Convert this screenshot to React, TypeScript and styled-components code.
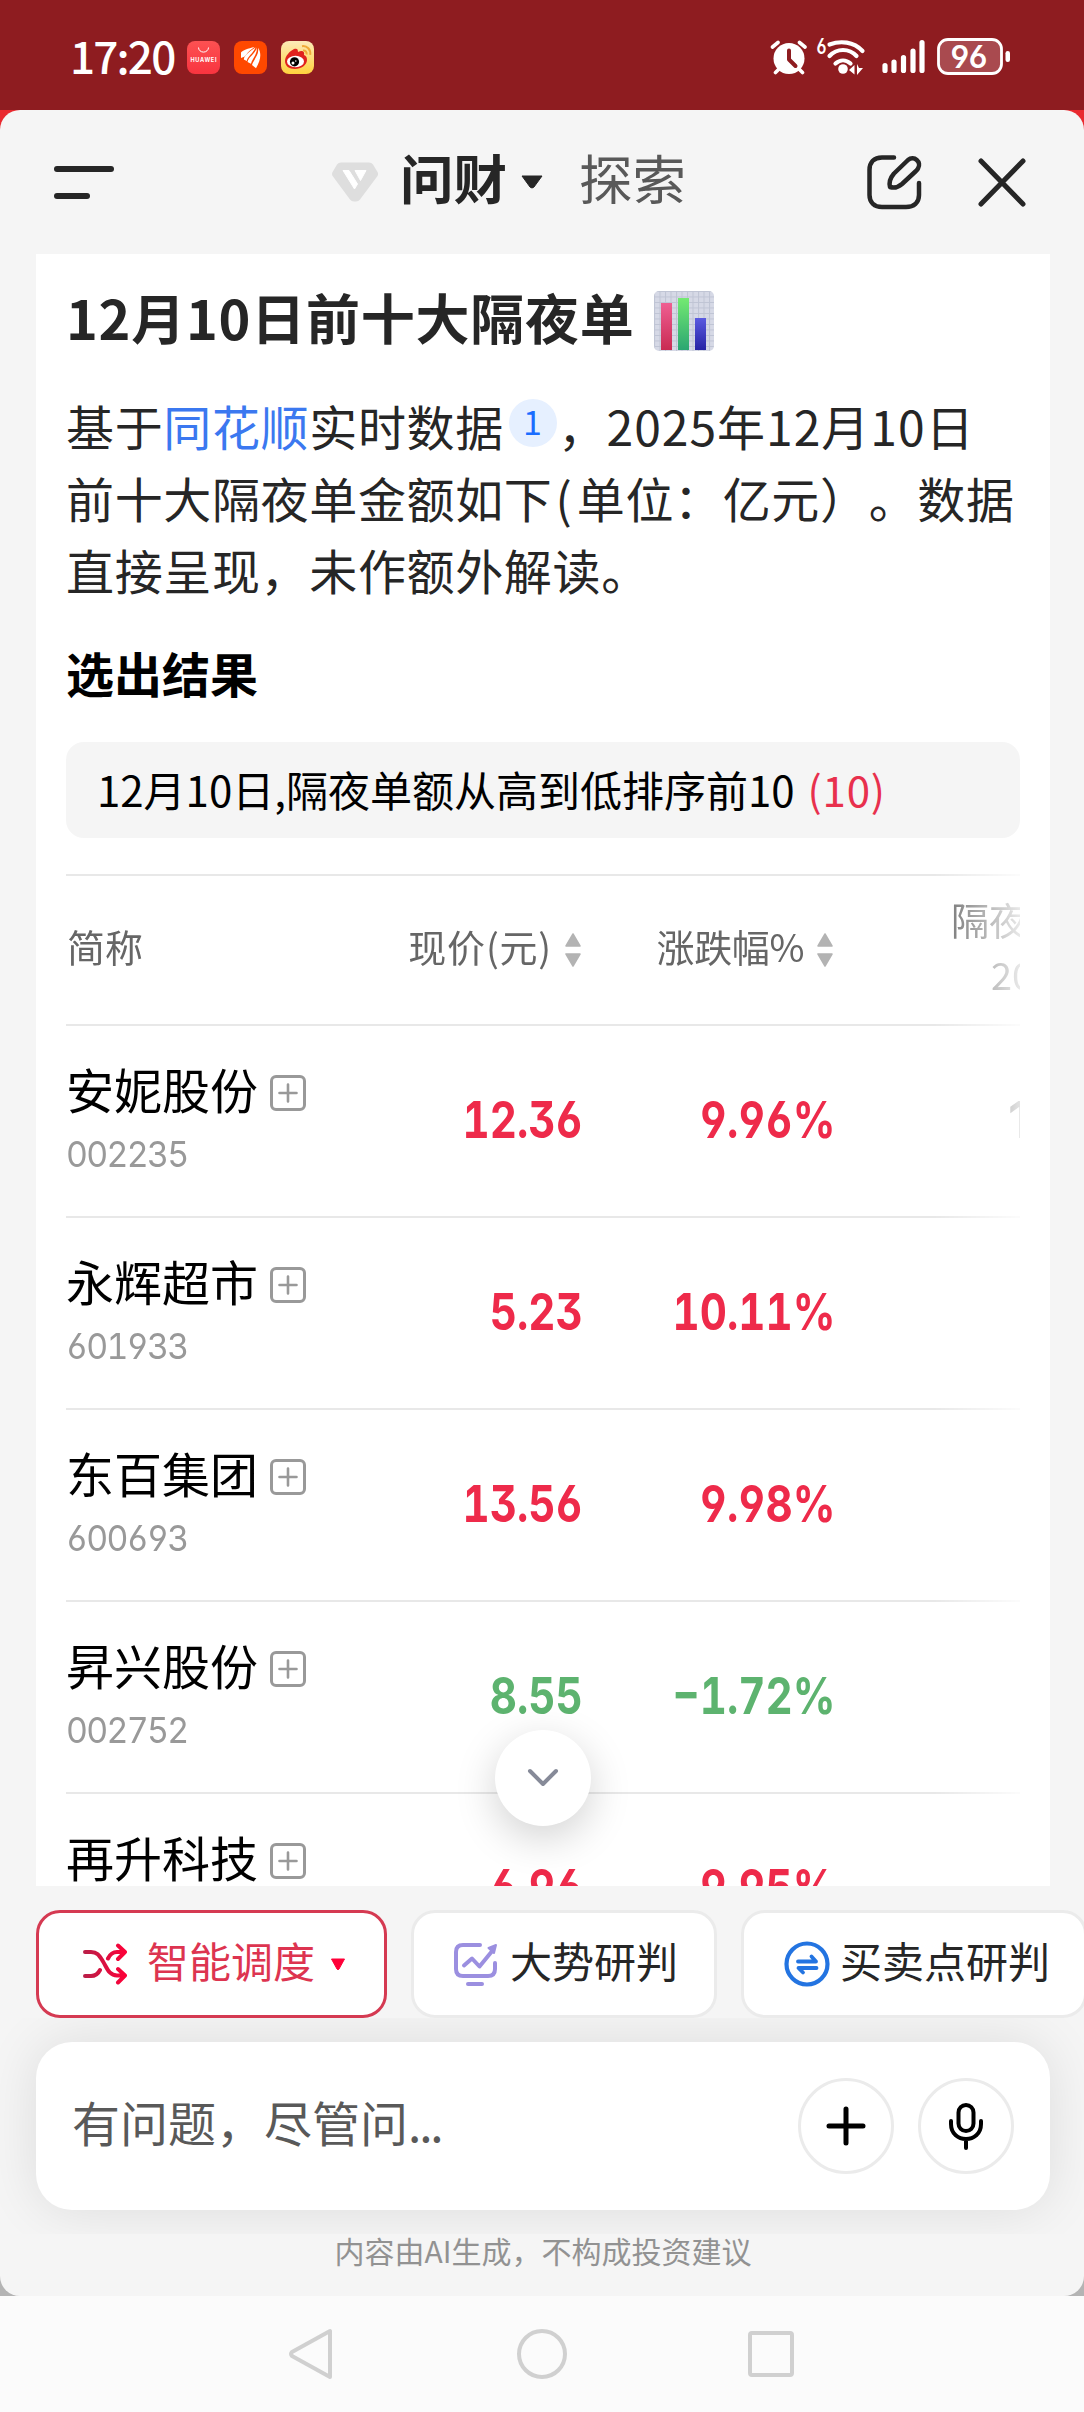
import React from "react";
import styled, { createGlobalStyle } from "styled-components";

const cjk = '"Noto Sans CJK SC", "Noto Sans", sans-serif';
const num = 'Inter, "Noto Sans CJK SC", sans-serif';
const red = "#ee2a4a";
const green = "#5db36f";

const GlobalStyle = createGlobalStyle`
  * { box-sizing: border-box; }
  html, body { margin: 0; padding: 0; }
  body { width: 1084px; overflow: hidden; font-family: ${cjk}; color: #262626; background: #fbfbfb; }
  h1, h2, p { margin: 0; }
  svg { display: block; flex: none; }
  button { font: inherit; border: 0; padding: 0; margin: 0; background: none; }
`;

const Screen = styled.div`
  width: 1084px;
  height: 2412px;
  display: flex;
  flex-direction: column;
  overflow: hidden;
  text-spacing-trim: space-all;
`;

const StatusBar = styled.header`
  flex: none;
  height: 110px;
  background: #8e1c20;
  color: #fff;
  display: flex;
  align-items: center;
  padding: 4px 74px 0 70px;
`;

const Clock = styled.span`
  width: 117px;
  margin-top: -5px;
  font-size: 44px;
  line-height: 60px;
  font-weight: 500;
  letter-spacing: -1.8px;
  white-space: nowrap;
`;

const AppIcons = styled.div`
  display: flex;
  gap: 14px;
  flex: 1;
`;

const Backdrop = styled.div`
  flex: none;
  height: 2186px;
  background: linear-gradient(#e9292f 0 50%, #b4b4b4 50% 100%);
`;

const Sheet = styled.main`
  height: 100%;
  background: #f5f5f5;
  border-radius: 20px;
  display: flex;
  flex-direction: column;
  overflow: hidden;
`;

const TopBar = styled.div`
  flex: none;
  height: 144px;
  display: flex;
  align-items: center;
  padding: 0 58px 0 54px;
`;

const MenuButton = styled.button`
  width: 278px;
  display: flex;
  flex-direction: column;
  gap: 21px;
`;

const MenuLine = styled.span<{ $w: number }>`
  width: ${(p) => p.$w}px;
  height: 6px;
  border-radius: 3px;
  background: #262626;
`;

const Tab = styled.span<{ $active?: boolean }>`
  font-size: 53.5px;
  line-height: 70px;
  font-weight: ${(p) => (p.$active ? 700 : 400)};
  color: ${(p) => (p.$active ? "#262626" : "#595959")};
  margin-left: ${(p) => (p.$active ? 22 : 35)}px;
  margin-right: ${(p) => (p.$active ? 13 : 0)}px;
  margin-top: -11px;
`;

const TopActions = styled.div`
  margin-left: auto;
  display: flex;
  align-items: center;
  gap: 56px;
`;

const Card = styled.section`
  flex: none;
  position: relative;
  width: 1014px;
  height: 1632px;
  margin-left: 36px;
  padding: 27px 30px 0;
  background: #fff;
  overflow: hidden;
`;

const Title = styled.h1`
  display: flex;
  align-items: center;
  gap: 20px;
  height: 72px;
  font-size: 54px;
  line-height: 72px;
  font-weight: 700;
  letter-spacing: 0.75px;
  white-space: nowrap;
`;

const Intro = styled.p`
  margin-top: 36px;
  width: 970px;
  height: 216px;
  font-size: 48px;
  line-height: 72px;
  letter-spacing: 0.65px;
  white-space: nowrap;
`;

const Link = styled.span`
  color: #3b78f0;
`;

const DateText = styled.span`
  letter-spacing: 1px;
`;

const Paren = styled.span`
  margin-left: 3px;
  letter-spacing: 5px;
`;

const Cite = styled.sup`
  display: inline-flex;
  align-items: center;
  justify-content: center;
  width: 48px;
  height: 48px;
  margin: 0 1px 0 5px;
  vertical-align: 11px;
  border-radius: 50%;
  background: #e6f0ff;
  color: #1a6dff;
  font-size: 34px;
  line-height: 44px;
  padding-bottom: 4px;
`;

const SubTitle = styled.h2`
  margin-top: 31px;
  height: 72px;
  font-size: 48px;
  line-height: 72px;
  font-weight: 700;
  color: #000;
`;

const Filter = styled.div`
  margin-top: 34px;
  height: 96px;
  padding: 0 31px 3px;
  display: flex;
  align-items: center;
  gap: 13px;
  border-radius: 18px;
  background: #f5f5f5;
  color: #000;
  font-size: 42px;
  line-height: 60px;
  white-space: nowrap;
`;

const Count = styled.span`
  color: #e8304d;
  letter-spacing: 0.8px;
`;

const Table = styled.div`
  margin-top: 36px;
  width: 954px;
  overflow: hidden;
  border-top: 2px solid #e8e8e8;
  mask-image: linear-gradient(to right, #000 868px, rgba(0, 0, 0, 0.15) 954px);
`;

const Row = styled.div<{ $h: number }>`
  display: grid;
  grid-template-columns: 263px 252px 252px 420px;
  width: 1187px;
  height: ${(p) => p.$h}px;
  align-items: center;
  border-bottom: 2px solid #e8e8e8;
`;

const HeadCell = styled.div<{ $left?: boolean }>`
  display: flex;
  align-items: center;
  justify-content: ${(p) => (p.$left ? "flex-start" : "flex-end")};
  gap: 13px;
  padding-left: ${(p) => (p.$left ? 1 : 0)}px;
  color: #666;
  font-size: 38px;
  line-height: 54px;
  white-space: nowrap;
`;

const HeadText = styled.span<{ $ls?: number }>`
  margin-top: -8px;
  letter-spacing: ${(p) => p.$ls ?? 0}px;
`;

const WideHead = styled.div`
  color: #666;
  font-size: 38px;
  line-height: 55px;
  margin-top: -9px;
  padding-left: 118px;
  display: flex;
  flex-direction: column;
`;

const WideLine = styled.span<{ $indent?: number }>`
  padding-left: ${(p) => p.$indent ?? 0}px;
  white-space: nowrap;
`;

const NameCell = styled.div`
  display: flex;
  flex-direction: column;
`;

const NameLine = styled.div`
  display: flex;
  align-items: center;
  gap: 12px;
  height: 66px;
  color: #000;
  font-size: 48px;
  line-height: 66px;
  white-space: nowrap;
`;

const NameText = styled.span`
  margin-top: -6px;
`;

const AddBox = styled.svg`
  margin-top: 4px;
`;

const Code = styled.span`
  height: 60px;
  line-height: 61px;
  font-family: ${num};
  font-feature-settings: "tnum", "cv03", "cv04";
  font-size: 36px;
  letter-spacing: -1.8px;
  transform: scaleX(0.94);
  transform-origin: left;
  color: #999;
`;

const Value = styled.div<{ $color: string }>`
  justify-self: end;
  transform: scaleX(0.825);
  transform-origin: right;
  font-family: ${num};
  font-feature-settings: "tnum", "cv03", "cv04", "cv09";
  font-weight: 650;
  font-size: 51px;
  line-height: 60px;
  margin: -3px -2px 0 0;
  color: ${(p) => p.$color};
  white-space: nowrap;
`;

const Hidden = styled.div`
  padding-left: 175px;
  font-family: ${num};
  font-weight: 600;
  font-size: 51px;
  line-height: 60px;
  margin-top: -3px;
  color: #444;
`;

const DownButton = styled.button`
  position: absolute;
  left: 459px;
  top: 1476px;
  width: 96px;
  height: 96px;
  border-radius: 50%;
  background: #fff;
  display: flex;
  align-items: center;
  justify-content: center;
  box-shadow: 0 12px 42px rgba(0, 0, 0, 0.18);
`;

const Chips = styled.div`
  flex: none;
  height: 132px;
  padding: 24px 0 0 36px;
  display: flex;
  gap: 24px;
`;

const Chip = styled.button<{ $w: number; $active?: boolean }>`
  flex: none;
  width: ${(p) => p.$w}px;
  height: 108px;
  border: 3px solid ${(p) => (p.$active ? "#d53a52" : "#ebebeb")};
  border-radius: 24px;
  background: #fff;
  display: flex;
  align-items: center;
  padding-left: ${(p) => (p.$active ? 44 : 40)}px;
  font-size: 42px;
  line-height: 60px;
  color: ${(p) => (p.$active ? "#dd3450" : "#262626")};
  white-space: nowrap;
`;

const ChipText = styled.span<{ $gap: number }>`
  margin-left: ${(p) => p.$gap}px;
  margin-top: -8px;
`;

const Caret = styled.svg`
  margin-left: 15px;
`;

const Composer = styled.div`
  flex: none;
  height: 216px;
  padding: 24px 34px 24px 36px;
  overflow: hidden;
`;

const InputBox = styled.div`
  height: 168px;
  border-radius: 36px;
  background: #fff;
  box-shadow: 0 0 54px rgba(0, 0, 0, 0.1);
  display: flex;
  align-items: center;
  gap: 24px;
  padding: 0 36px;
`;

const Placeholder = styled.span`
  flex: 1;
  font-size: 48px;
  line-height: 66px;
  margin-top: -10px;
  color: #595959;
`;

const Dots = styled.span`
  letter-spacing: -2.2px;
`;

const RoundButton = styled.button`
  width: 96px;
  height: 96px;
  border: 3px solid #ebebeb;
  border-radius: 50%;
  display: flex;
  align-items: center;
  justify-content: center;
`;

const Disclaimer = styled.p`
  margin-top: -2px;
  text-align: center;
  font-size: 30px;
  line-height: 36px;
  color: #929292;
  padding-left: 2px;
`;

const NavBar = styled.nav`
  flex: 1;
  background: #fbfbfb;
  display: flex;
  align-items: center;
  padding-left: 288px;
`;

const NavIcon = styled.svg<{ $ml?: number }>`
  margin-left: ${(p) => p.$ml ?? 0}px;
`;

const HuaweiIcon = () => (
  <svg width="33" height="33" viewBox="0 0 33 33">
    <defs>
      <linearGradient id="hw" x1="0" y1="0" x2="0" y2="1">
        <stop offset="0" stopColor="#fd5152" />
        <stop offset="1" stopColor="#f8343f" />
      </linearGradient>
    </defs>
    <rect width="33" height="33" rx="8" fill="url(#hw)" />
    <path d="M11.5 6.5a5 4.6 0 0 0 10 0" fill="none" stroke="#fff" strokeWidth="1" />
    <text x="16.5" y="21" textAnchor="middle" fontSize="5.6" fontWeight="700" fontFamily="Inter, sans-serif" fill="#fff" textLength="26">HUAWEI</text>
  </svg>
);

const FeatherIcon = () => (
  <svg width="33" height="33" viewBox="0 0 33 33">
    <rect width="33" height="33" rx="8" fill="#ff4800" />
    <g fill="#fff">
      <path d="M20.500 6C14 7.500 8.500 9.500 7 11.500V17c3-1 4-1.500 5-3 2-3 5-5.500 8.500-8z" />
      <path d="M21.500 6.500C17 9.500 10 14 9.800 18.500l3 1.500c.2-4 6.700-8 8.700-13.500z" />
      <path d="M22.800 6.500C22 12 14.500 15.500 13.500 21l3.500 1.800c.5-4.300 6.500-9.300 5.800-16.300z" />
      <path d="M24 6.800c1.500 7-4.500 11.700-6 17.200l4 3.200C26.500 20 28 12.500 24 6.800z" />
    </g>
  </svg>
);

const WeiboIcon = () => (
  <svg width="33" height="33" viewBox="0 0 33 33">
    <defs>
      <linearGradient id="wb" x1="0" y1="0" x2="0" y2="1">
        <stop offset="0" stopColor="#fdeab8" />
        <stop offset="1" stopColor="#ffd23e" />
      </linearGradient>
    </defs>
    <rect width="33" height="33" rx="8" fill="url(#wb)" />
    <path d="M4 20c0-5 5-10 9-12 3-1 4 0 4 3 4-2 7-1 6 3 2 1 3 2 3 5 0 5-6 9-12 9S4 25 4 20z" fill="#e0221e" />
    <ellipse cx="14.500" cy="20.500" rx="8.500" ry="5.800" fill="#fff" />
    <circle cx="13.500" cy="20.800" r="4.600" fill="#000" />
    <circle cx="12" cy="22" r="1.500" fill="#fff" />
    <circle cx="14.800" cy="20" r=".8" fill="#fff" />
    <path d="M21 5.200c5-.8 9 3.500 8.200 8.600M22 9.500c2.400-.2 4 1.600 3.600 4" fill="none" stroke="#f0aa38" strokeWidth="2" />
  </svg>
);

const StatusGlyph = styled.text`
  font-family: Inter, sans-serif;
  font-weight: 600;
  font-feature-settings: "cv03", "cv04";
  fill: #fff;
  stroke: none;
`;

const StatusIcons = () => (
  <svg width="240" height="78" viewBox="770 17 240 78" fill="none" stroke="#fff" strokeLinecap="round">
    <circle cx="789" cy="57.500" r="15.500" fill="#fff" stroke="none" />
    <path d="M772.500 46l5.500-4.500M805 46l-5.500-4.500M779 68l-3.500 3.500M799 68l3.500 3.500" strokeWidth="3.600" />
    <path d="M789 49.500v9l6.500 6.500" stroke="#8e1c20" strokeWidth="4" strokeLinejoin="round" />
    <StatusGlyph x="816.500" y="53" fontSize="21" textLength="10" lengthAdjust="spacingAndGlyphs">6</StatusGlyph>
    <path d="M829.500 43.500c11-4 24-3 33 6.500M829.500 55c7.500-8 19.500-8 27 0M835.500 62.500c4.500-4 10.500-4 15 0" strokeWidth="4.200" />
    <circle cx="843" cy="68" r="4.800" fill="#fff" stroke="none" />
    <path d="M849 69l5.500-5v9.500zM857 63v11l6-7h-4z" fill="#fff" stroke="none" />
    <path d="M885 64.500v5M894 61v8.500M903.500 56.500v13M913 50v19.500M922 41.500v28" strokeWidth="5.200" />
    <rect x="938.500" y="38.500" width="63" height="34" rx="9.500" fill="#a94a4f" strokeWidth="2.800" />
    <rect x="1005.500" y="50" width="4.500" height="11" rx="2.200" fill="#fff" stroke="none" />
    <StatusGlyph x="950.500" y="66.500" fontSize="31.500" textLength="37" lengthAdjust="spacingAndGlyphs">96</StatusGlyph>
  </svg>
);

const EmojiSvg = styled.svg`
  margin-top: 8px;
`;

const ChartEmoji = () => (
  <EmojiSvg width="60" height="60" viewBox="0 0 60 60">
    <defs>
      <pattern id="grid" width="5.500" height="5.500" patternUnits="userSpaceOnUse">
        <rect width="5.500" height="5.500" fill="#d6d9e6" />
        <path d="M0 .5h5.500M.5 0v5.500" stroke="#bfc4d4" strokeWidth="1" />
      </pattern>
      <linearGradient id="b1" x1="0" y1="0" x2="0" y2="1"><stop offset="0" stopColor="#ef5f92" /><stop offset="1" stopColor="#c92a52" /></linearGradient>
      <linearGradient id="b2" x1="0" y1="0" x2="0" y2="1"><stop offset="0" stopColor="#74ea72" /><stop offset="1" stopColor="#2ba672" /></linearGradient>
      <linearGradient id="b3" x1="0" y1="0" x2="0" y2="1"><stop offset="0" stopColor="#5b5be0" /><stop offset="1" stopColor="#2522a4" /></linearGradient>
    </defs>
    <rect width="60" height="60" rx="5" fill="url(#grid)" />
    <rect x="7" y="12" width="11" height="47" fill="url(#b1)" />
    <rect x="24" y="7" width="11" height="52" fill="url(#b2)" />
    <rect x="41" y="27" width="11" height="32" fill="url(#b3)" />
  </EmojiSvg>
);

const Sort = () => (
  <svg width="16" height="36" viewBox="0 0 16 36" fill="#b3b3b3">
    <path d="M8 2l7 12H1zM8 34L1 22h14z" stroke="#b3b3b3" strokeWidth="1.500" strokeLinejoin="round" />
  </svg>
);

const Plus = () => (
  <AddBox width="36" height="36" viewBox="0 0 36 36" fill="none" stroke="#999" strokeLinecap="round">
    <rect x="1.500" y="1.500" width="33" height="33" rx="4.500" strokeWidth="3" />
    <path d="M18 9.500v17M9.500 18h17" strokeWidth="2.600" />
  </AddBox>
);

const stocks = [
  { name: "安妮股份", code: "002235", price: "12.36", pct: "9.96%", up: true, more: "1" },
  { name: "永辉超市", code: "601933", price: "5.23", pct: "10.11%", up: true, more: "" },
  { name: "东百集团", code: "600693", price: "13.56", pct: "9.98%", up: true, more: "" },
  { name: "昇兴股份", code: "002752", price: "8.55", pct: "−1.72%", up: false, more: "" },
  { name: "再升科技", code: "", price: "6.96", pct: "9.95%", up: true, more: "" },
];

export default function App() {
  return (
    <Screen>
      <GlobalStyle />
      <StatusBar>
        <Clock>17:20</Clock>
        <AppIcons>
          <HuaweiIcon />
          <FeatherIcon />
          <WeiboIcon />
        </AppIcons>
        <StatusIcons />
      </StatusBar>
      <Backdrop>
        <Sheet>
          <TopBar>
            <MenuButton aria-label="菜单">
              <MenuLine $w={60} />
              <MenuLine $w={36} />
            </MenuButton>
            <svg width="46" height="40" viewBox="0 0 46 40">
              <path d="M9 .5h28q2.500 0 4 2l4.500 7.500q1.200 2 0 4L28 37.500q-1.500 2-4 2h-2q-2.500 0-4-2L.6 14q-1.200-2 0-4L5 2.500Q6.500.5 9 .5z" fill="#dedede" />
              <path d="M11 8.500h6l8.500 13.500-3 5zM23 8.500h11l-5.500 10z" fill="#fff" stroke="#fff" strokeLinejoin="round" />
            </svg>
            <Tab $active>问财</Tab>
            <svg width="24" height="14" viewBox="0 0 24 14">
              <path d="M2 1h20L14 12q-2 2-4 0z" fill="#262626" stroke="#262626" strokeLinejoin="round" />
            </svg>
            <Tab>探索</Tab>
            <TopActions>
              <svg width="55" height="55" viewBox="0 0 55 55" fill="none" stroke="#262626" strokeWidth="4.500" strokeLinecap="round">
                <path d="M27 2.500H15C7 2.500 2.500 7.500 2.500 15v25C2.500 47.500 7.500 52 15 52h24c8 0 13-4.500 13-12V28" />
                <path d="M23 32c-1.500-6 1-10 4-13.500L41 5c6-5 14 2 10 8.500-.5 1-1 1.500-2 2.500L35 29c-3.500 3-7.500 4.500-12 3z" strokeLinejoin="round" />
              </svg>
              <svg width="48" height="49" viewBox="0 0 48 49" fill="none" stroke="#262626" strokeWidth="5" strokeLinecap="round">
                <path d="M3 3l42 43M45 3L3 46" />
              </svg>
            </TopActions>
          </TopBar>

          <Card>
            <Title>
              12月10日前十大隔夜单
              <ChartEmoji />
            </Title>
            <Intro>
              基于<Link>同花顺</Link>实时数据<Cite>1</Cite>，<DateText>2025年12月10日</DateText>
              <br />
              前十大隔夜单金额如下<Paren>(</Paren>单位：亿元）。数据
              <br />
              直接呈现，未作额外解读。
            </Intro>
            <SubTitle>选出结果</SubTitle>
            <Filter>
              <span>12月10日,隔夜单额从高到低排序前10</span>
              <Count>(10)</Count>
            </Filter>
            <Table>
              <Row $h={150}>
                <HeadCell $left><HeadText>简称</HeadText></HeadCell>
                <HeadCell><HeadText $ls={0.8}>现价(元)</HeadText><Sort /></HeadCell>
                <HeadCell><HeadText $ls={-0.4}>涨跌幅%</HeadText><Sort /></HeadCell>
                <WideHead>
                  <WideLine>隔夜单额(亿元)</WideLine>
                  <WideLine $indent={40}>2025.12.10</WideLine>
                </WideHead>
              </Row>
              {stocks.map((s) => (
                <Row key={s.name} $h={192}>
                  <NameCell>
                    <NameLine>
                      <NameText>{s.name}</NameText>
                      <Plus />
                    </NameLine>
                    <Code>{s.code}</Code>
                  </NameCell>
                  <Value $color={s.up ? red : green}>{s.price}</Value>
                  <Value $color={s.up ? red : green}>{s.pct}</Value>
                  <Hidden>{s.more}</Hidden>
                </Row>
              ))}
            </Table>
            <DownButton aria-label="向下">
              <svg width="32" height="20" viewBox="0 0 32 20" fill="none" stroke="#868a98" strokeWidth="4" strokeLinecap="round" strokeLinejoin="round">
                <path d="M3 3l13 13L29 3" />
              </svg>
            </DownButton>
          </Card>

          <Chips>
            <Chip $w={351} $active>
              <svg width="44" height="42" viewBox="0 0 44 42" fill="none" strokeWidth="4" strokeLinecap="round" strokeLinejoin="round">
                <defs>
                  <linearGradient id="sh" gradientUnits="userSpaceOnUse" x1="0" y1="0" x2="44" y2="0">
                    <stop offset="0" stopColor="#b81f48" />
                    <stop offset="1" stopColor="#ff0038" />
                  </linearGradient>
                </defs>
                <g stroke="url(#sh)">
                  <path d="M2 9h6c6 0 8 3 12 9.500s6 14 14 14h7M2 33h6c4 0 7-2 9-6M25 15.500c2-4 5-6.400 9-6.400h7M35 2.500l7 6.500-7 7M35 26l7 6.500-7 7" />
                </g>
              </svg>
              <ChipText $gap={20}>智能调度</ChipText>
              <Caret width="16" height="13" viewBox="0 0 16 13">
                <path d="M1.500 1h13L9 11q-1 1.300-2 0z" fill="#ff0038" stroke="#ff0038" strokeLinejoin="round" />
              </Caret>
            </Chip>
            <Chip $w={306}>
              <svg width="44" height="44" viewBox="0 0 44 44" fill="none" stroke="#9b8fe0" strokeWidth="4" strokeLinecap="round" strokeLinejoin="round">
                <path d="M26 3H9Q2 3 2 10v17q0 7 7 7h25q7 0 7-7v-6" />
                <path d="M10 23.500l8-7 7.500 8L39 8" />
                <path d="M34.500 6l7.500-3-2 8z" fill="#9b8fe0" strokeWidth="2" />
                <path d="M14 42h14" />
              </svg>
              <ChipText $gap={12}>大势研判</ChipText>
            </Chip>
            <Chip $w={346}>
              <svg width="46" height="46" viewBox="0 0 46 46" fill="none" stroke="#2374e1" strokeLinecap="round" strokeLinejoin="round">
                <circle cx="23" cy="23" r="20.500" strokeWidth="4.200" />
                <path d="M14 20.500h18l-4.500-5M32.500 27H14.500l4.500 4.500" strokeWidth="3.800" />
              </svg>
              <ChipText $gap={10}>买卖点研判</ChipText>
            </Chip>
          </Chips>

          <Composer>
            <InputBox>
              <Placeholder>有问题，尽管问<Dots>...</Dots></Placeholder>
              <RoundButton aria-label="添加">
                <svg width="40" height="40" viewBox="0 0 40 40" stroke="#000" strokeWidth="5" strokeLinecap="round">
                  <path d="M20 3v34M3 20h34" />
                </svg>
              </RoundButton>
              <RoundButton aria-label="语音">
                <svg width="36" height="48" viewBox="0 0 36 48" fill="none" stroke="#000" strokeWidth="4" strokeLinecap="round">
                  <rect x="10.500" y="3" width="15" height="26" rx="7.500" />
                  <path d="M3 19v3c0 20 30 20 30 0v-3M18 37v9" />
                </svg>
              </RoundButton>
            </InputBox>
          </Composer>
          <Disclaimer>内容由AI生成，不构成投资建议</Disclaimer>
        </Sheet>
      </Backdrop>
      <NavBar>
        <NavIcon width="46" height="54" viewBox="0 0 46 54" fill="none" stroke="#d0d0d0" strokeWidth="4" strokeLinejoin="round">
          <path d="M42 4v46L4 29q-2-2 0-4z" />
        </NavIcon>
        <NavIcon $ml={182} width="52" height="52" viewBox="0 0 52 52" fill="none" stroke="#d0d0d0" strokeWidth="4">
          <circle cx="26" cy="26" r="23" />
        </NavIcon>
        <NavIcon $ml={180} width="46" height="46" viewBox="0 0 46 46" fill="none" stroke="#d0d0d0" strokeWidth="4">
          <rect x="2" y="2" width="42" height="42" rx="2" />
        </NavIcon>
      </NavBar>
    </Screen>
  );
}
